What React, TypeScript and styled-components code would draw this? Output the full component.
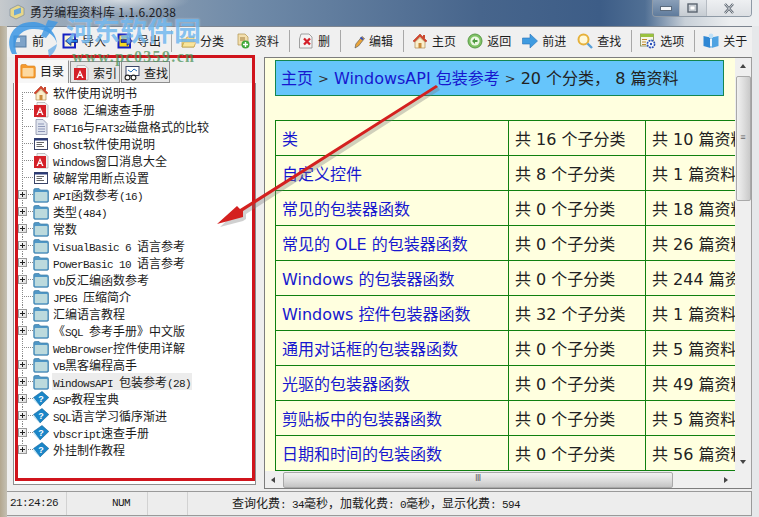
import React from "react";
import styled, { createGlobalStyle } from "styled-components";

const Global = createGlobalStyle`
  html, body { margin: 0; padding: 0; overflow: hidden; background: #d6d9dc; }
`;

const MONO = `"Liberation Mono", "Noto Sans CJK SC", monospace`;
const CJK = `"Noto Sans CJK SC", "Liberation Sans", sans-serif`;
const WEB = `"DejaVu Sans", "Noto Sans CJK SC", sans-serif`;

const Page = styled.div`
  position: relative;
  width: 759px;
  height: 517px;
  overflow: hidden;
  display: flex;
  flex-direction: column;
  background: linear-gradient(90deg, #b3a78f 0, #c4c0b4 7px, #dfe2e4 7px, #dfe2e4 752px, #e6e8ea 752px);
`;

const TitleBar = styled.div`
  height: 26px;
  flex: none;
  display: flex;
  align-items: flex-start;
  padding-left: 9px;
  background:
    radial-gradient(ellipse 70px 14px at 120px 0, rgba(235, 238, 240, 0.75), transparent),
    linear-gradient(90deg, #c6cacd 0, #9aa9b9 60px, #6f8aa8 250px, #47658c 480px, #3d5d87 600px, #506f94 645px, #c8d0d8 685px, #eceef0 730px);
`;

const AppMark = styled.svg`
  width: 16px;
  height: 16px;
  margin: 4px 5px 0 0;
  flex: none;
`;

const TitleText = styled.div`
  font: 12px/24px ${CJK};
  color: #1c2026;
  letter-spacing: 0.15px;
`;

const Controls = styled.div`
  margin-left: auto;
  margin-right: 7px;
  display: flex;
  height: 17px;
  border: 1px solid #8f9aa6;
  border-top: none;
  border-radius: 0 0 4px 4px;
  overflow: hidden;
  box-sizing: border-box;
  width: 100px;
`;

const Ctl = styled.div<{ $w: number; $bg: string }>`
  width: ${(p) => p.$w}px;
  display: flex;
  align-items: center;
  justify-content: center;
  background: ${(p) => p.$bg};
  border-right: 1px solid #b6bcc3;
  &:last-child { border-right: none; }
`;

const Client = styled.div`
  flex: 1;
  min-height: 0;
  margin: 0 7px 1px;
  display: flex;
  flex-direction: column;
  border-top: 1px solid #7d8590;
  background: #eeeeee;
`;

const Toolbar = styled.div`
  height: 30px;
  flex: none;
  display: flex;
  align-items: center;
  padding-bottom: 3px;
  box-sizing: border-box;
  background: #f0f0f0;
`;

const Tool = styled.div<{ $gapAfter?: number }>`
  display: flex;
  align-items: center;
  gap: 4px;
  padding: 0 6px 0 5px;
  margin-right: ${(p) => p.$gapAfter ?? 0}px;
  font: 12px/16px ${CJK};
  color: #1d1d1d;
  white-space: nowrap;
`;

const ToolSep = styled.div`
  width: 1px;
  height: 22px;
  margin: 0 3px 0 4px;
  background: #a8a8a8;
  flex: none;
`;

const Body = styled.div`
  flex: 1;
  min-height: 0;
  display: flex;
`;

const Left = styled.div`
  width: 249px;
  flex: none;
  box-sizing: border-box;
  padding: 3px 0 6px 6px;
  display: flex;
  flex-direction: column;
`;

const Tabs = styled.div`
  height: 23px;
  flex: none;
  display: flex;
  align-items: flex-end;
  padding-left: 3px;
`;

const Tab = styled.div<{ $active?: boolean; $w: number }>`
  width: ${(p) => p.$w}px;
  height: ${(p) => (p.$active ? 23 : 22)}px;
  box-sizing: border-box;
  display: flex;
  align-items: center;
  gap: 4px;
  padding: ${(p) => (p.$active ? "0 0 2px 3px" : "2px 0 0 2px")};
  font: 12px/16px ${CJK};
  color: #161616;
  background: ${(p) => (p.$active ? "#f7f7f7" : "#e6e6e6")};
  border: 1px solid #8e8e8e;
  border-left-color: ${(p) => (p.$active ? "transparent" : "#8e8e8e")};
  border-top-color: ${(p) => (p.$active ? "transparent" : "#8e8e8e")};
  border-bottom: ${(p) => (p.$active ? "none" : "1px solid #8e8e8e")};
  margin-right: 1px;
`;

const TreeBox = styled.div`
  flex: 1;
  min-height: 0;
  background: #ffffff;
  border: 1px solid #8e8e8e;
  border-top: none;
  padding-top: 1px;
  overflow: hidden;
`;

const Row = styled.div`
  height: 17px;
  display: flex;
  align-items: center;
`;

const Gutter = styled.div<{ $first?: boolean; $last?: boolean }>`
  position: relative;
  width: 19px;
  height: 17px;
  flex: none;
  &::before {
    content: "";
    position: absolute;
    left: 8px;
    top: ${(p) => (p.$first ? "8px" : "0")};
    bottom: ${(p) => (p.$last ? "8px" : "0")};
    border-left: 1px dotted #8a8a8a;
  }
  &::after {
    content: "";
    position: absolute;
    left: 8px;
    right: 0;
    top: 8px;
    border-top: 1px dotted #8a8a8a;
  }
`;

const Expander = styled.div`
  position: absolute;
  z-index: 1;
  left: 4px;
  top: 4px;
  width: 9px;
  height: 9px;
  box-sizing: border-box;
  border: 1px solid #9a9a9a;
  background: linear-gradient(135deg, #ffffff, #dcdcdc);
  &::before {
    content: "";
    position: absolute;
    left: 1px;
    right: 1px;
    top: 3px;
    height: 1px;
    background: #222;
  }
  &::after {
    content: "";
    position: absolute;
    top: 1px;
    bottom: 1px;
    left: 3px;
    width: 1px;
    background: #222;
  }
`;

const Label = styled.div<{ $hl?: boolean }>`
  margin-left: 3px;
  padding: 0 1px;
  height: 17px;
  font: 11px/17px ${MONO};
  letter-spacing: -0.6px;
  color: #1a1a1a;
  white-space: pre;
  background: ${(p) => (p.$hl ? "#ececec" : "transparent")};
  & > span { font-size: 12px; letter-spacing: 0; font-family: "Noto Sans CJK SC", sans-serif; }
`;

const Splitter = styled.div`
  width: 8px;
  flex: none;
`;

const Right = styled.div`
  flex: 1;
  min-width: 0;
  margin-bottom: 2px;
  display: flex;
  flex-direction: column;
  border: 1px solid #7d7d7d;
  border-right-color: #a0a0a0;
  background: #f0f0f0;
`;

const MainRow = styled.div`
  flex: 1;
  min-height: 0;
  display: flex;
`;

const Content = styled.div`
  flex: 1;
  min-width: 0;
  overflow: hidden;
  background: #ffffdf;
  padding: 2px 0 0 10px;
  font: 16px/20px ${WEB};
  color: #222222;
`;

const Crumb = styled.div`
  width: 449px;
  height: 36px;
  box-sizing: border-box;
  display: flex;
  align-items: center;
  padding: 2px 0 0 5px;
  gap: 5px;
  white-space: pre;
  background: #66c5fb;
  border: 1px solid #148650;
  margin-bottom: 24px;
`;

const Link = styled.span`
  color: #1717cf;
`;

const Gt = styled.span`
  color: #333;
  font-size: 13px;
`;

const Table = styled.table`
  border-collapse: collapse;
  table-layout: fixed;
  width: 600px;
`;

const Cell = styled.td<{ $w: number }>`
  width: ${(p) => p.$w}px;
  height: 35px;
  box-sizing: border-box;
  padding: 3px 0 0 6px;
  border: 1px solid #108010;
  white-space: nowrap;
  overflow: hidden;
`;

const VScroll = styled.div`
  width: 16px;
  flex: none;
  display: flex;
  flex-direction: column;
  align-items: center;
  background: #efefef;
`;

const Arrow = styled.div<{ $dir: "up" | "down" | "left" | "right"; $m?: string }>`
  width: 0;
  height: 0;
  flex: none;
  margin: ${(p) => p.$m ?? "0"};
  border: 3px solid transparent;
  ${(p) =>
    p.$dir === "up"
      ? "border-bottom: 4px solid #444; border-top: none;"
      : p.$dir === "down"
      ? "border-top: 4px solid #444; border-bottom: none;"
      : p.$dir === "left"
      ? "border-right: 4px solid #444; border-left: none;"
      : "border-left: 4px solid #444; border-right: none;"}
`;

const VThumb = styled.div`
  width: 15px;
  height: 125px;
  margin: 8px 0 auto;
  box-sizing: border-box;
  border: 1px solid #a9a9a9;
  border-radius: 2px;
  background: linear-gradient(90deg, #f1f1f1, #dcdcdc 55%, #c9c9c9);
  display: flex;
  align-items: center;
  justify-content: center;
  font: 9px/9px "Liberation Mono", monospace;
  color: #666;
`;

const BottomRow = styled.div`
  height: 17px;
  flex: none;
  display: flex;
`;

const HScroll = styled.div`
  flex: 1;
  display: flex;
  align-items: center;
  padding: 0 7px 0 6px;
  background: #efefef;
`;

const HThumb = styled.div`
  width: 390px;
  height: 16px;
  margin: 0 auto 0 8px;
  box-sizing: border-box;
  border: 1px solid #a9a9a9;
  border-radius: 2px;
  background: linear-gradient(180deg, #f1f1f1, #dcdcdc 55%, #c4c4c4);
  display: flex;
  align-items: center;
  justify-content: center;
  font: 9px/9px "Liberation Mono", monospace;
  color: #666;
`;

const Corner = styled.div`
  width: 16px;
  background: #efefef;
`;

const StatusBar = styled.div`
  height: 23px;
  flex: none;
  display: flex;
  border: 1px solid #9a9a9a;
  border-left: none;
  background: #ededed;
  font: 11px/22px ${MONO};
  letter-spacing: -0.6px;
  color: #1a1a1a;
  white-space: pre;
  & span { font-size: 12px; letter-spacing: 0; font-family: "Noto Sans CJK SC", sans-serif; }
`;

const StatusCell = styled.div<{ $w?: number; $pl: number }>`
  ${(p) => (p.$w ? `width: ${p.$w}px; flex: none;` : "flex: 1;")}
  box-sizing: border-box;
  padding-left: ${(p) => p.$pl}px;
  border-right: 1px solid #d2d2d2;
  &:last-child { border-right: none; }
`;

/* overlays */
const RedFrame = styled.div`
  position: absolute;
  left: 15px;
  top: 55px;
  width: 240px;
  height: 426px;
  box-sizing: border-box;
  border: 3px solid #d0141c;
  pointer-events: none;
`;

const ArrowLayer = styled.svg`
  position: absolute;
  left: 0;
  top: 0;
  width: 759px;
  height: 517px;
  pointer-events: none;
`;

const MarkText = styled.div`
  position: absolute;
  left: 66px;
  top: 13px;
  font: 700 27px/34px ${CJK};
  color: rgba(90, 172, 236, 0.72);
  text-shadow: 0 0 2px rgba(255, 255, 255, 0.55);
  pointer-events: none;
  white-space: nowrap;
`;

const MarkUrl = styled.div`
  position: absolute;
  left: 72px;
  top: 48px;
  font: 700 16px/18px "Liberation Serif", serif;
  color: rgba(70, 145, 85, 0.72);
  letter-spacing: 1.35px;
  pointer-events: none;
  white-space: nowrap;
`;

const MarkLogo = styled.svg`
  position: absolute;
  left: 4px;
  top: 14px;
  width: 56px;
  height: 56px;
  pointer-events: none;
`;

/* icons */
const Svg = styled.svg`
  width: 16px;
  height: 16px;
  flex: none;
  display: block;
`;

const HomeIcon = () => (
  <Svg viewBox="0 0 16 16">
    <path d="M8 1 L1 8 L2.5 9 L8 3.5 L13.5 9 L15 8 Z" fill="#d9442a" stroke="#a02a18" strokeWidth=".5" />
    <rect x="11" y="2" width="2" height="3.5" fill="#c84a30" />
    <path d="M3 9 L8 4.5 L13 9 V15 H3 Z" fill="#fbeecb" stroke="#b08a50" strokeWidth=".7" />
    <rect x="6.5" y="10" width="3" height="5" fill="#c98b3c" />
  </Svg>
);
const PdfIcon = () => (
  <Svg viewBox="0 0 16 16">
    <path d="M4 0.5 H12 L15 3.5 V15 H4 Z" fill="#f2f2f2" stroke="#9a9a9a" strokeWidth=".6" />
    <rect x="1" y="3" width="12" height="12" fill="#d42027" />
    <path d="M7 5 L10.5 13 H9 L8.2 11 H5.8 L5 13 H3.5 Z M7 7.6 L6.2 9.8 H7.8 Z" fill="#fff" />
  </Svg>
);
const PageIcon = () => (
  <Svg viewBox="0 0 16 16">
    <path d="M3 .5 H10 L14 4.5 V15.5 H3 Z" fill="#dfe4ee" stroke="#8a90a8" strokeWidth=".8" />
    <path d="M5 5 H11 M5 7.5 H12 M5 10 H12 M5 12.5 H12" stroke="#8e97b8" strokeWidth="1" />
  </Svg>
);
const WinIcon = () => (
  <Svg viewBox="0 0 16 16">
    <rect x="1.5" y="2.5" width="13" height="11" fill="#fff" stroke="#3a4468" strokeWidth="1" />
    <rect x="1.5" y="2.5" width="13" height="2" fill="#2a3a78" />
    <path d="M3.5 6.5 H11 M3.5 8.5 H9 M3.5 10.5 H11" stroke="#666" strokeWidth="1" />
  </Svg>
);
const FolderIcon = () => (
  <Svg viewBox="0 0 16 16">
    <path d="M.7 3 Q.7 1.5 2.2 1.5 H6 L7.5 3 H14 Q15.5 3 15.5 4.5 V14 Q15.5 15.3 14.2 15.3 H2 Q.7 15.3 .7 14 Z" fill="#4f97c6" stroke="#3f7ea8" strokeWidth=".7" />
    <rect x="1.8" y="5" width="12.6" height="9.2" rx=".8" fill="#bcdadd" />
  </Svg>
);
const BookIcon = () => (
  <Svg viewBox="0 0 16 16">
    <path d="M.5 6.5 L9 .5 L15.8 6.5 L7 15 Z" fill="#1a86c8" stroke="#0e5f96" strokeWidth=".6" />
    <path d="M.5 6.5 L7 15 L7.5 16 L.5 9 Z" fill="#bfe4f6" />
    <text x="8" y="10.5" fontSize="9" fontWeight="700" textAnchor="middle" fill="#fff" fontFamily="Liberation Sans">?</text>
  </Svg>
);
const OrangeFolder = () => (
  <Svg viewBox="0 0 16 16">
    <path d="M.8 3 Q.8 1.5 2 1.5 H6 L7.5 3 H14 Q15.3 3 15.3 4.5 V13.5 Q15.3 15 14 15 H2 Q.8 15 .8 13.5 Z" fill="#f59a2e" stroke="#d87f1a" strokeWidth=".6" />
    <rect x="2.5" y="5" width="11" height="8.5" rx=".8" fill="#fdd9a0" />
  </Svg>
);
const FindTab = () => (
  <Svg viewBox="0 0 16 16">
    <rect x="2" y="1.5" width="13" height="9" fill="#fff" stroke="#3a4468" strokeWidth="1" />
    <path d="M4 5 L7 7 L10 4 L13 6" stroke="#2a70b8" fill="none" />
    <circle cx="3.5" cy="12.5" r="2.4" fill="#fff" stroke="#222" strokeWidth="1.1" />
    <circle cx="9.5" cy="12.5" r="2.4" fill="#fff" stroke="#222" strokeWidth="1.1" />
  </Svg>
);
const FirstIcon = () => (
  <Svg viewBox="0 0 16 16">
    <rect x="2" y="3" width="12" height="11" fill="#7fa3c8" stroke="#557ba3" />
    <rect x="4" y="5" width="4" height="4" fill="#d7e3ee" />
  </Svg>
);
const ImportIcon = () => (
  <Svg viewBox="0 0 16 16">
    <rect x="1.5" y="1.5" width="11.5" height="13" fill="#fbf6d0" stroke="#1420c4" strokeWidth="2" />
    <path d="M15.5 6.5 H9 V3.5 L3.5 8 L9 12.5 V9.5 H15.5 Z" fill="#1f78e0" stroke="#0c1c70" strokeWidth=".7" />
  </Svg>
);
const ExportIcon = () => (
  <Svg viewBox="0 0 16 16">
    <rect x="1.5" y="1.5" width="11.5" height="13" fill="#f4d820" stroke="#1420c4" strokeWidth="2" />
    <path d="M4 6.5 H10 V3.5 L15.5 8 L10 12.5 V9.5 H4 Z" fill="#1c3ac8" stroke="#0c1c70" strokeWidth=".7" />
  </Svg>
);
const CatIcon = () => (
  <Svg viewBox="0 0 16 16">
    <path d="M2 6 H6 L7 4 H14 V14 H2 Z" fill="#f0d070" stroke="#b89a40" strokeWidth=".7" />
    <path d="M4 9 H16 L14 14 H2 Z" fill="#f9e59a" stroke="#b89a40" strokeWidth=".7" />
  </Svg>
);
const ResIcon = () => (
  <Svg viewBox="0 0 16 16">
    <path d="M3 1 H10 L13 4 V12 H3 Z" fill="#f3dfae" stroke="#b0924e" strokeWidth=".7" />
    <path d="M5 5 H10 M5 7 H10" stroke="#a07a3a" />
    <circle cx="10.5" cy="11.5" r="4" fill="#3fa83a" />
    <path d="M10.5 9 V14 M8 11.5 H13" stroke="#fff" strokeWidth="1.4" />
  </Svg>
);
const DelIcon = () => (
  <Svg viewBox="0 0 16 16">
    <path d="M3 1 H11 L14 4 V15 H1.5 V6 Z" fill="#f4f4f4" stroke="#8a8a8a" strokeWidth=".8" />
    <path d="M6 5.5 L12 11.5 M12 5.5 L6 11.5" stroke="#d4202a" strokeWidth="2.3" />
  </Svg>
);
const EditIcon = () => (
  <Svg viewBox="0 0 16 16">
    <path d="M6 15 L6.8 11 L13 3.5 L15.5 5.5 L9.5 13 Z" fill="#e9a43a" stroke="#555" strokeWidth=".6" />
    <path d="M11.5 4.5 L14 6.6" stroke="#3050c0" strokeWidth="2" />
  </Svg>
);
const BackIcon = () => (
  <Svg viewBox="0 0 16 16">
    <circle cx="8" cy="8" r="7" fill="#7fc264" stroke="#5a9a48" />
    <circle cx="8" cy="8" r="4.6" fill="#ecf7e4" />
    <path d="M10.5 7 H8 V5 L5 8 L8 11 V9 H10.5 Z" fill="#4d9a40" />
  </Svg>
);
const ForwardIcon = () => (
  <Svg viewBox="0 0 16 16">
    <path d="M.5 5 H8 V1 L15.5 8 L8 15 V11 H.5 Z" fill="#3f9be0" stroke="#2a74b8" strokeWidth=".6" />
  </Svg>
);
const SearchIcon = () => (
  <Svg viewBox="0 0 16 16">
    <circle cx="6.5" cy="6.5" r="5" fill="#fff8d8" stroke="#e6b13a" strokeWidth="2" />
    <path d="M10.5 10.5 L15 15" stroke="#5aa0d8" strokeWidth="2.4" />
  </Svg>
);
const OptIcon = () => (
  <Svg viewBox="0 0 16 16">
    <rect x=".5" y="1" width="13" height="12" fill="#f6f6e8" stroke="#7a8a50" strokeWidth=".8" />
    <rect x=".5" y="1" width="13" height="3" fill="#9ac23e" />
    <path d="M2 6.5 H7 M2 9 H6 M2 11.5 H6" stroke="#c08a30" />
    <circle cx="11" cy="11" r="3.6" fill="#fff" stroke="#2a50b8" strokeWidth="1.6" strokeDasharray="2 .8" />
    <circle cx="11" cy="11" r="1.2" fill="#2a50b8" />
  </Svg>
);
const AboutIcon = () => (
  <Svg viewBox="0 0 16 16">
    <path d="M.5 3 L7.5 4.5 V15 L.5 13 Z" fill="#2f87d4" />
    <path d="M15.5 3 L8.5 4.5 V15 L15.5 13 Z" fill="#4fa3e2" />
    <circle cx="8" cy="3" r="2.4" fill="#bfe0f7" />
    <rect x="7" y="6" width="2" height="7" fill="#e8f4fd" />
  </Svg>
);

const tree: { t: React.ReactNode; icon: React.ReactNode; plus?: boolean; hl?: boolean }[] = [
  { t: <span>软件使用说明书</span>, icon: <HomeIcon /> },
  { t: <>8088 <span>汇编速查手册</span></>, icon: <PdfIcon /> },
  { t: <>FAT16<span>与</span>FAT32<span>磁盘格式的比较</span></>, icon: <PageIcon /> },
  { t: <>Ghost<span>软件使用说明</span></>, icon: <WinIcon /> },
  { t: <>Windows<span>窗口消息大全</span></>, icon: <PdfIcon /> },
  { t: <span>破解常用断点设置</span>, icon: <WinIcon /> },
  { t: <>API<span>函数参考</span>(16)</>, icon: <FolderIcon />, plus: true },
  { t: <><span>类型</span>(484)</>, icon: <FolderIcon />, plus: true },
  { t: <span>常数</span>, icon: <FolderIcon />, plus: true },
  { t: <>VisualBasic 6 <span>语言参考</span></>, icon: <FolderIcon />, plus: true },
  { t: <>PowerBasic 10 <span>语言参考</span></>, icon: <FolderIcon />, plus: true },
  { t: <>vb<span>反汇编函数参考</span></>, icon: <FolderIcon />, plus: true },
  { t: <>JPEG <span>压缩简介</span></>, icon: <FolderIcon /> },
  { t: <span>汇编语言教程</span>, icon: <FolderIcon />, plus: true },
  { t: <><span>《</span>SQL <span>参考手册》中文版</span></>, icon: <FolderIcon />, plus: true },
  { t: <>WebBrowser<span>控件使用详解</span></>, icon: <FolderIcon /> },
  { t: <>VB<span>黑客编程高手</span></>, icon: <FolderIcon />, plus: true },
  { t: <>WindowsAPI <span>包装参考</span>(28)</>, icon: <FolderIcon />, plus: true, hl: true },
  { t: <>ASP<span>教程宝典</span></>, icon: <BookIcon />, plus: true },
  { t: <>SQL<span>语言学习循序渐进</span></>, icon: <BookIcon />, plus: true },
  { t: <>vbscript<span>速查手册</span></>, icon: <BookIcon />, plus: true },
  { t: <span>外挂制作教程</span>, icon: <BookIcon />, plus: true },
];

const rows: [string, number, number][] = [
  ["类", 16, 10],
  ["自定义控件", 8, 1],
  ["常见的包装器函数", 0, 18],
  ["常见的 OLE 的包装器函数", 0, 26],
  ["Windows 的包装器函数", 0, 244],
  ["Windows 控件包装器函数", 32, 1],
  ["通用对话框的包装器函数", 0, 5],
  ["光驱的包装器函数", 0, 49],
  ["剪贴板中的包装器函数", 0, 5],
  ["日期和时间的包装函数", 0, 56],
];

export default function App() {
  return (
    <Page>
      <Global />
      <TitleBar>
        <AppMark viewBox="0 0 16 16">
          <path d="M1 5 L9 1 L15 4 V11 L7 15 L1 12 Z" fill="#e8d88a" stroke="#7d8a9a" strokeWidth=".7" />
          <path d="M5 6 L12 3.5 V9 L5 11.5 Z" fill="#6aa6d8" />
        </AppMark>
        <TitleText>勇芳编程资料库 1.1.6.2038</TitleText>
        <Controls>
          <Ctl $w={27} $bg="linear-gradient(180deg,#8a9fb8,#5f7b9c)">
            <svg width="12" height="5" viewBox="0 0 12 5"><rect x=".5" y=".5" width="11" height="4" fill="#f4f6f8" stroke="#5a6a7c" /></svg>
          </Ctl>
          <Ctl $w={27} $bg="linear-gradient(180deg,#e2e6ea,#c6ccd2)">
            <svg width="11" height="10" viewBox="0 0 11 10"><rect x="1" y="1" width="9" height="8" fill="none" stroke="#59636e" strokeWidth="1.4" /><rect x="3" y="3" width="5" height="4" fill="#fff" stroke="#9aa3ac" strokeWidth=".6" /></svg>
          </Ctl>
          <Ctl $w={46} $bg="linear-gradient(180deg,#eef0f2,#dcdfe3)">
            <svg width="12" height="11" viewBox="0 0 12 11"><path d="M2 1 L10 10 M10 1 L2 10" stroke="#59636e" strokeWidth="2.4" /><path d="M2 1 L10 10 M10 1 L2 10" stroke="#f2f4f6" strokeWidth=".8" /></svg>
          </Ctl>
        </Controls>
      </TitleBar>
      <Client>
        <Toolbar>
          <Tool $gapAfter={7}><FirstIcon />前</Tool>
          <Tool><ImportIcon />导入</Tool>
          <Tool><ExportIcon />导出</Tool>
          <ToolSep />
          <Tool><CatIcon />分类</Tool>
          <Tool><ResIcon />资料</Tool>
          <ToolSep />
          <Tool><DelIcon />删</Tool>
          <ToolSep />
          <Tool><EditIcon />编辑</Tool>
          <ToolSep />
          <Tool><HomeIcon />主页</Tool>
          <Tool><BackIcon />返回</Tool>
          <Tool><ForwardIcon />前进</Tool>
          <Tool><SearchIcon />查找</Tool>
          <ToolSep />
          <Tool><OptIcon />选项</Tool>
          <ToolSep />
          <Tool><AboutIcon />关于</Tool>
        </Toolbar>
        <Body>
          <Left>
            <Tabs>
              <Tab $active $w={53}><OrangeFolder />目录</Tab>
              <Tab $w={50}><PdfIcon />索引</Tab>
              <Tab $w={49}><FindTab />查找</Tab>
            </Tabs>
            <TreeBox>
              {tree.map((n, i) => (
                <Row key={i}>
                  <Gutter $first={i === 0} $last={i === tree.length - 1}>
                    {n.plus && <Expander />}
                  </Gutter>
                  {n.icon}
                  <Label $hl={n.hl}>{n.t}</Label>
                </Row>
              ))}
            </TreeBox>
          </Left>
          <Splitter />
          <Right>
            <MainRow>
              <Content>
                <Crumb>
                  <Link>主页</Link>
                  <Gt>&gt;</Gt>
                  <Link>WindowsAPI 包装参考</Link>
                  <Gt>&gt;</Gt>
                  <span>20 个分类， 8 篇资料</span>
                </Crumb>
                <Table>
                  <tbody>
                    {rows.map(([name, a, b]) => (
                      <tr key={name}>
                        <Cell $w={233}><Link>{name}</Link></Cell>
                        <Cell $w={137}>共 {a} 个子分类</Cell>
                        <Cell $w={230}>共 {b} 篇资料</Cell>
                      </tr>
                    ))}
                    <tr>
                      <Cell $w={233} />
                      <Cell $w={137} />
                      <Cell $w={230} />
                    </tr>
                  </tbody>
                </Table>
              </Content>
              <VScroll>
                <Arrow $dir="up" $m="6px 0 0" />
                <VThumb>≡</VThumb>
                <Arrow $dir="down" $m="0 0 7px" />
              </VScroll>
            </MainRow>
            <BottomRow>
              <HScroll>
                <Arrow $dir="left" />
                <HThumb>Ⅲ</HThumb>
                <Arrow $dir="right" />
              </HScroll>
              <Corner />
            </BottomRow>
          </Right>
        </Body>
        <StatusBar>
          <StatusCell $w={60} $pl={3}>21:24:26</StatusCell>
          <StatusCell $w={81} $pl={45}>NUM</StatusCell>
          <StatusCell $w={40} $pl={0} />
          <StatusCell $pl={44}>
            <span>查询化费</span>: 34<span>毫秒，加载化费</span>: 0<span>毫秒，显示化费</span>: 594
          </StatusCell>
        </StatusBar>
      </Client>

      <RedFrame />
      <ArrowLayer viewBox="0 0 759 517">
        <polygon points="440,90 246,214 246,219 243,221 220,227 238,210 240,212 437,86" fill="#777" opacity=".35" />
        <polygon points="438,87 243,211 243,217 217,224 237,206 240,209 436,85" fill="#d4201f" />
      </ArrowLayer>
      <MarkLogo viewBox="0 0 56 56">
        <path d="M8 40 C0 24 10 8 28 8 C40 8 52 16 53 30 C51 20 40 14 28 15 C16 16 8 26 13 40 Z" fill="rgba(60,150,228,.85)" />
        <path d="M44 6 L54 8 L42 24 L37 22 Z" fill="rgba(60,150,228,.8)" />
        <path d="M53 30 C52 36 49 40 45 43 L44 36 Z" fill="rgba(60,150,228,.6)" />
      </MarkLogo>
      <MarkText>河东软件园</MarkText>
      <MarkUrl>www.pc0359.cn</MarkUrl>
    </Page>
  );
}
